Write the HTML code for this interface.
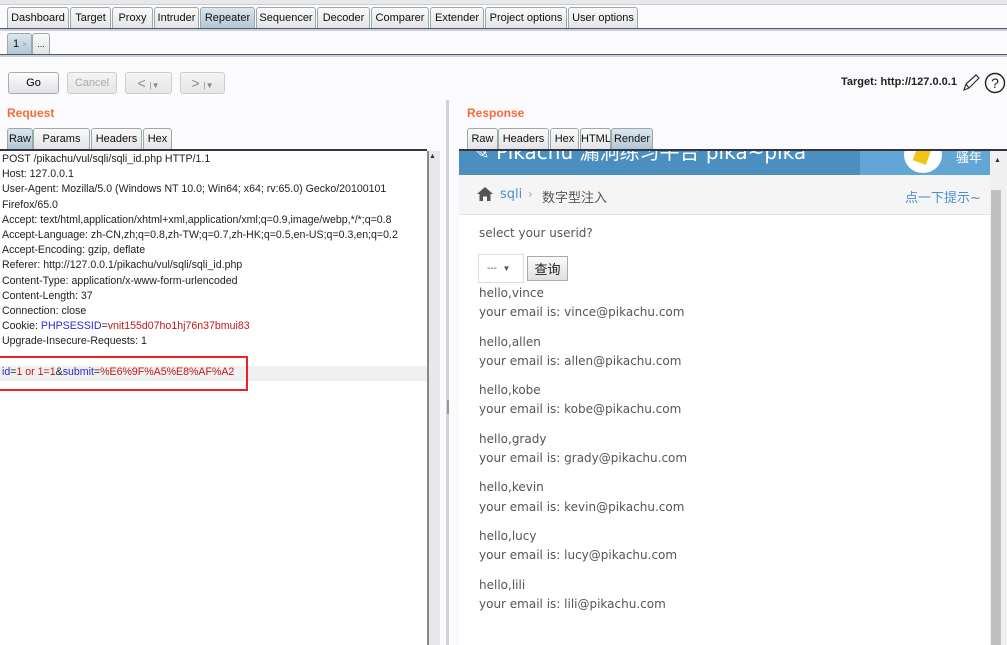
<!DOCTYPE html>
<html><head><meta charset="utf-8"><style>
*{margin:0;padding:0;box-sizing:border-box}
body{width:1007px;height:645px;overflow:hidden;background:#fbfbfd;font-family:"Liberation Sans","Noto Sans CJK SC",sans-serif;position:relative;font-size:11px;color:#000}
.a{position:absolute}
.tab{position:absolute;height:21px;border:1px solid #9aa;border-bottom:none;border-radius:3px 3px 0 0;background:linear-gradient(#fafafa,#e4e4e8);font-size:11px;line-height:20px;text-align:center;color:#111;white-space:nowrap;overflow:hidden}
.sel{background:linear-gradient(#dbe6ef,#b3c6d6)}
.btn{position:absolute;height:22px;border:1px solid #aaa;border-radius:3px;background:linear-gradient(#fdfdfd,#e2e2e6);font-size:11px;line-height:20px;text-align:center}
.dis{color:#aaa;border-color:#ccc;background:linear-gradient(#f4f4f4,#e6e6e8)}
.req div{height:15.2px;line-height:15.2px;white-space:nowrap;font-size:10.6px;color:#222;padding-left:2px}
.b{color:#2a2ad0}.r{color:#c01818}
.web{font-family:"DejaVu Sans","Noto Sans CJK SC",sans-serif;color:#555;font-size:12px}
</style></head><body>
<div class="a" style="left:0;top:0;width:1007px;height:5px;background:#e8e8ec;border-bottom:1px solid #ccc"></div>
<div class="tab" style="left:7px;top:7px;width:62px">Dashboard</div>
<div class="tab" style="left:70px;top:7px;width:41px">Target</div>
<div class="tab" style="left:112px;top:7px;width:41px">Proxy</div>
<div class="tab" style="left:154px;top:7px;width:45px">Intruder</div>
<div class="tab sel" style="left:200px;top:7px;width:55px">Repeater</div>
<div class="tab" style="left:256px;top:7px;width:60px">Sequencer</div>
<div class="tab" style="left:317px;top:7px;width:53px">Decoder</div>
<div class="tab" style="left:371px;top:7px;width:58px">Comparer</div>
<div class="tab" style="left:430px;top:7px;width:54px">Extender</div>
<div class="tab" style="left:485px;top:7px;width:82px">Project options</div>
<div class="tab" style="left:568px;top:7px;width:70px">User options</div>
<div class="a" style="left:0;top:28px;width:1007px;height:3px;border-top:1px solid #556;background:#c8d0da"></div>
<div class="tab sel" style="left:7px;top:33px;width:25px;text-align:left;padding-left:5px">1 <span style="color:#999;font-size:8px">×</span></div>
<div class="tab" style="left:32px;top:33px;width:18px;font-size:9px">...</div>
<div class="a" style="left:0;top:54px;width:1007px;height:3px;border-top:1px solid #556;background:#c8d0da"></div>
<div class="btn" style="left:8px;top:72px;width:51px">Go</div>
<div class="btn dis" style="left:67px;top:72px;width:50px">Cancel</div>
<div class="btn dis" style="left:125px;top:72px;width:47px;font-size:14px;color:#888">&lt; <span style="font-size:8px">|▼</span></div>
<div class="btn dis" style="left:180px;top:72px;width:45px;font-size:14px;color:#888">&gt; <span style="font-size:8px">|▼</span></div>
<div class="a" style="left:841px;top:76px;font-size:11px;font-weight:bold;color:#222">Target: http://127.0.0.1</div>
<svg class="a" style="left:961px;top:73px" width="20" height="20"><path d="M3 17 L5 11 L15 2 L18 5 L8 15 Z M5 11 L8 15" fill="none" stroke="#333" stroke-width="1.2"/></svg>
<svg class="a" style="left:984px;top:72px" width="22" height="22"><circle cx="11" cy="11" r="9.5" fill="none" stroke="#222" stroke-width="1.4"/><text x="11" y="16" font-size="14" text-anchor="middle" font-family="Liberation Sans" fill="#222">?</text></svg>
<div class="a" style="left:7px;top:106px;color:#f96a3a;font-weight:bold;font-size:12px">Request</div>
<div class="a" style="left:467px;top:106px;color:#f96a3a;font-weight:bold;font-size:12px">Response</div>
<div class="tab sel" style="left:7px;top:128px;width:26px">Raw</div>
<div class="tab" style="left:33px;top:128px;width:57px">Params</div>
<div class="tab" style="left:91px;top:128px;width:51px">Headers</div>
<div class="tab" style="left:143px;top:128px;width:29px">Hex</div>
<div class="tab" style="left:467px;top:128px;width:31px">Raw</div>
<div class="tab" style="left:498px;top:128px;width:51px">Headers</div>
<div class="tab" style="left:550px;top:128px;width:29px">Hex</div>
<div class="tab" style="left:580px;top:128px;width:31px">HTML</div>
<div class="tab sel" style="left:611px;top:128px;width:42px">Render</div>
<div class="a" style="left:0;top:149px;width:427px;height:2px;background:#334"></div>
<div class="a" style="left:459px;top:149px;width:548px;height:2px;background:#334"></div>
<div class="a" style="left:0;top:151px;width:427px;height:494px;background:#fff"></div>
<div class="a" style="left:0;top:366px;width:427px;height:15px;background:#f0f0f0"></div>
<div class="a req" style="left:0;top:152px">
<div>POST /pikachu/vul/sqli/sqli_id.php HTTP/1.1</div>
<div>Host: 127.0.0.1</div>
<div>User-Agent: Mozilla/5.0 (Windows NT 10.0; Win64; x64; rv:65.0) Gecko/20100101</div>
<div>Firefox/65.0</div>
<div>Accept: text/html,application/xhtml+xml,application/xml;q=0.9,image/webp,*/*;q=0.8</div>
<div>Accept-Language: zh-CN,zh;q=0.8,zh-TW;q=0.7,zh-HK;q=0.5,en-US;q=0.3,en;q=0.2</div>
<div>Accept-Encoding: gzip, deflate</div>
<div>Referer: http://127.0.0.1/pikachu/vul/sqli/sqli_id.php</div>
<div>Content-Type: application/x-www-form-urlencoded</div>
<div>Content-Length: 37</div>
<div>Connection: close</div>
<div>Cookie: <span class="b">PHPSESSID</span>=<span class="r">vnit155d07ho1hj76n37bmui83</span></div>
<div>Upgrade-Insecure-Requests: 1</div>
<div></div>
<div><span class="b">id</span>=<span class="r">1 or 1=1</span>&amp;<span class="b">submit</span>=<span class="r">%E6%9F%A5%E8%AF%A2</span></div>
</div>
<div class="a" style="left:0;top:356px;width:248px;height:35px;border:2px solid #ee2222;border-left:none"></div>
<div class="a" style="left:427px;top:151px;width:13px;height:494px;background:#e8e8ec;border-left:2px solid #888"></div>
<div class="a" style="left:429px;top:153px;font-size:7px;color:#333">▲</div>
<div class="a" style="left:446px;top:100px;width:3px;height:545px;background:#d0d3da"></div>
<div class="a" style="left:447px;top:400px;width:2px;height:14px;background:#999"></div>
<div class="a" style="left:459px;top:151px;width:531px;height:494px;background:#fff"></div>
<div class="a" style="left:459px;top:151px;width:401px;height:24px;background:#4a8fbf;overflow:hidden"><div style="color:#fff;font-size:20px;margin-top:-15px;margin-left:14px;font-family:'DejaVu Sans','Noto Sans CJK SC',sans-serif;white-space:nowrap">✎ Pikachu 漏洞练习平台 pika~pika</div></div>
<div class="a" style="left:860px;top:151px;width:130px;height:24px;background:#62a6d6;overflow:hidden"><div style="position:absolute;left:44px;top:-14px;width:38px;height:36px;border-radius:50%;background:#fff"></div><div style="position:absolute;left:55px;top:-4px;width:14px;height:16px;background:#f2c418;transform:rotate(20deg)"></div><div style="position:absolute;left:96px;top:-4px;color:#fff;font-size:13px">骚年</div></div>
<div class="a" style="left:459px;top:175px;width:531px;height:40px;background:#f5f5f5;border-bottom:1px solid #e4e4e4"></div>
<svg class="a" style="left:476px;top:186px" width="18" height="16"><path d="M9 1 L1 8 H3.5 V15 H7 V10.5 H11 V15 H14.5 V8 H17 Z" fill="#555"/></svg>
<div class="a web" style="left:500px;top:187px;color:#4a8fcf;font-size:13px">sqli</div>
<div class="a web" style="left:528px;top:187px;color:#aaa">›</div>
<div class="a web" style="left:542px;top:187px;font-size:13px">数字型注入</div>
<div class="a web" style="left:905px;top:187px;color:#4a8fcf;font-size:13px">点一下提示~</div>
<div class="a web" style="left:479px;top:226px">select your userid?</div>
<div class="a" style="left:478px;top:254px;width:46px;height:29px;border:1px solid #ddd;background:#fff;font-size:10px;color:#555;line-height:27px;padding-left:8px">--- &nbsp;<span style="font-size:8px">▼</span></div>
<div class="a" style="left:527px;top:256px;width:41px;height:25px;border:1px solid #aaa;background:linear-gradient(#fafafa,#e0e0e0);font-size:13px;line-height:23px;text-align:center;color:#222;font-family:'Noto Sans CJK SC',sans-serif">查询</div>
<div class="a web" style="left:479px;top:284px;line-height:19.3px">
hello,vince<br>your email is: vince@pikachu.com<br><div style="height:10px"></div>
hello,allen<br>your email is: allen@pikachu.com<br><div style="height:10px"></div>
hello,kobe<br>your email is: kobe@pikachu.com<br><div style="height:10px"></div>
hello,grady<br>your email is: grady@pikachu.com<br><div style="height:10px"></div>
hello,kevin<br>your email is: kevin@pikachu.com<br><div style="height:10px"></div>
hello,lucy<br>your email is: lucy@pikachu.com<br><div style="height:10px"></div>
hello,lili<br>your email is: lili@pikachu.com
</div>
<div class="a" style="left:990px;top:151px;width:17px;height:494px;background:#f0f0f0"></div>
<div class="a" style="left:994px;top:157px;font-size:7px;color:#333">▲</div>
<div class="a" style="left:991px;top:190px;width:10px;height:455px;background:#c0c0c0"></div>
</body></html>
